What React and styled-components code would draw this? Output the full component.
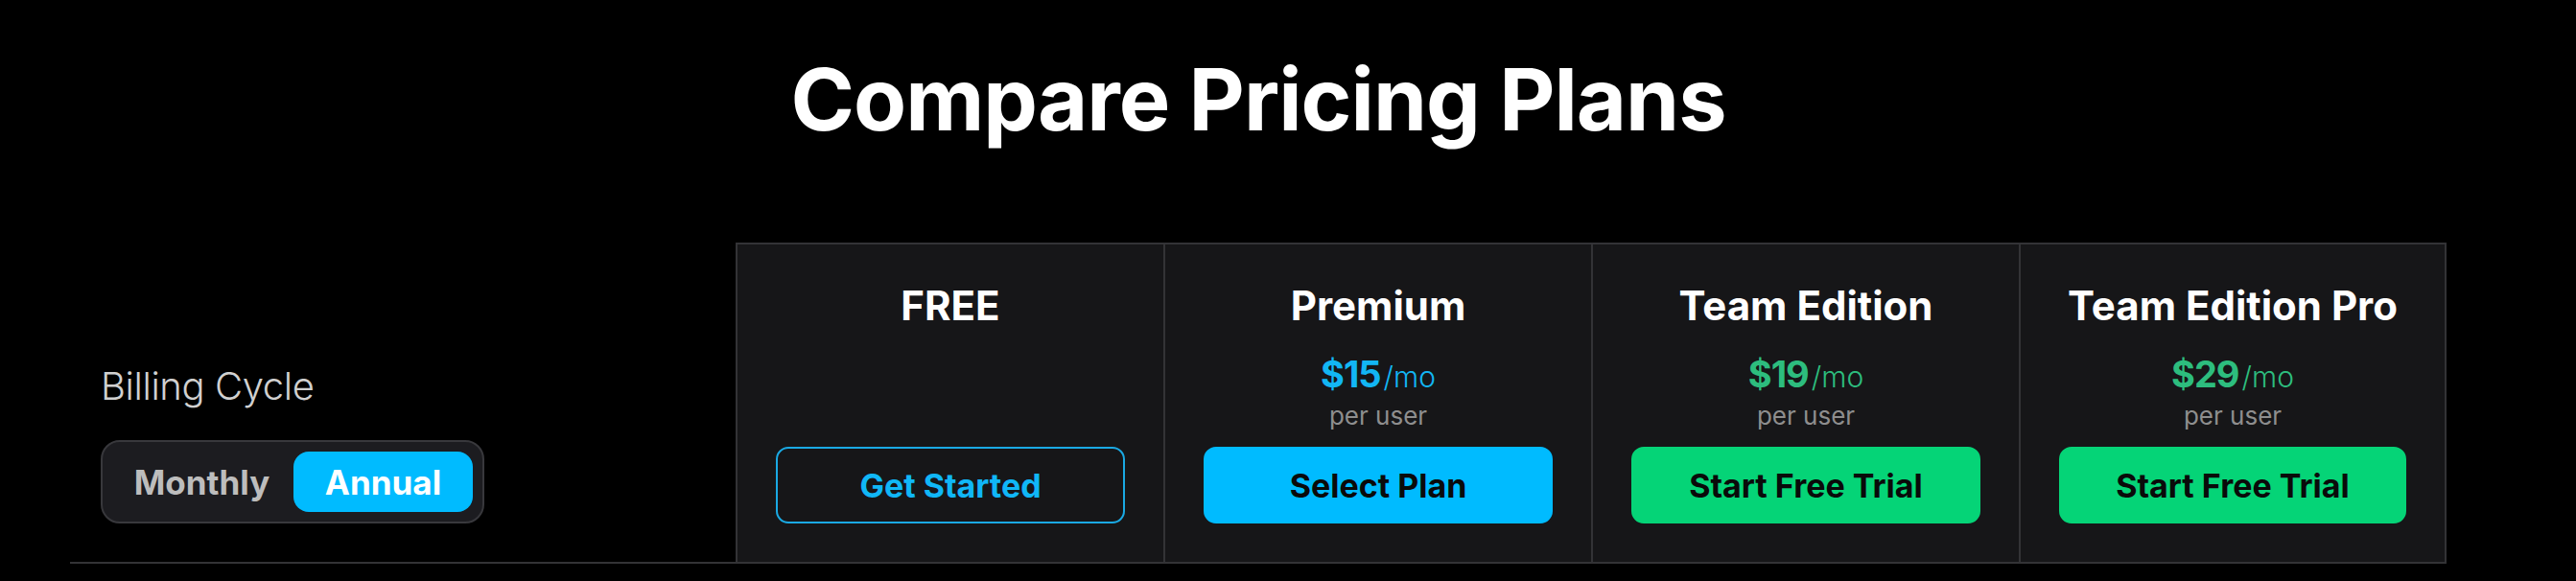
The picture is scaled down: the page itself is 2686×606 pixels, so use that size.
import React from "react";
import styled, { createGlobalStyle } from "styled-components";

const GlobalStyle = createGlobalStyle`
  html, body {
    margin: 0;
    padding: 0;
    background: #000;
  }
  body {
    font-family: Inter, "Noto Sans", sans-serif;
    color: #fff;
  }
  * { box-sizing: border-box; }
`;

const Page = styled.main`
  width: 2478px;
  margin-left: 73px;
  padding-top: 50px;
`;

const Title = styled.h1`
  margin: 0 0 95px;
  text-align: center;
  font-size: 90px;
  line-height: 108px;
  font-weight: 700;
  letter-spacing: -1px;
  color: #fff;
`;

const Row = styled.section`
  display: grid;
  grid-template-columns: 694px repeat(4, 1fr);
  border-bottom: 2px solid #333336;
`;

const LabelCell = styled.div`
  display: flex;
  flex-direction: column;
  justify-content: flex-end;
  align-items: flex-start;
  padding: 0 0 40px 32px;
`;

const Label = styled.div`
  font-size: 40px;
  line-height: 48px;
  font-weight: 300;
  letter-spacing: -0.4px;
  color: #d0d0d0;
  margin-bottom: 32px;
`;

const Toggle = styled.div`
  display: inline-flex;
  gap: 2px;
  padding: 10px;
  border: 2px solid #38383c;
  border-radius: 20px;
  background: #1c1c20;
`;

const ToggleOption = styled.button`
  width: 187px;
  height: 63px;
  border: none;
  border-radius: 16px;
  font-family: inherit;
  font-size: 35px;
  font-weight: 700;
  cursor: pointer;
  background: ${(p) => (p.$active ? "#00bbff" : "transparent")};
  color: ${(p) => (p.$active ? "#ffffff" : "#bdbdbd")};
`;

const PlanCell = styled.div`
  display: flex;
  flex-direction: column;
  align-items: center;
  background: #161618;
  border-top: 2px solid #333336;
  border-left: 2px solid #333336;
  border-right: ${(p) => (p.$last ? "2px solid #333336" : "none")};
  padding: 39px 40px 40px;
`;

const PlanName = styled.h2`
  margin: 0;
  font-size: 42px;
  line-height: 50px;
  font-weight: 700;
  color: #fff;
  white-space: nowrap;
`;

const PriceBlock = styled.div`
  display: flex;
  flex-direction: column;
  align-items: center;
  margin: 23px 0 16px;
`;

const Price = styled.div`
  display: flex;
  align-items: baseline;
  gap: 3px;
  line-height: 46px;
  color: ${(p) => p.$color};
`;

const Amount = styled.span`
  font-size: 38px;
  font-weight: 700;
  letter-spacing: -1px;
`;

const Per = styled.span`
  font-size: 30px;
  font-weight: 300;
`;

const PerUser = styled.div`
  margin-top: 2px;
  font-size: 26px;
  line-height: 32px;
  font-weight: 400;
  color: #8e8e8e;
`;

const ActionButton = styled.button`
  margin-top: auto;
  width: 100%;
  height: 80px;
  border-radius: 13px;
  font-family: inherit;
  font-size: 34px;
  font-weight: 700;
  cursor: pointer;
  border: 2px solid ${(p) => (p.$variant === "outline" ? "#1aa9e3" : p.$bg)};
  background: ${(p) => (p.$variant === "outline" ? "transparent" : p.$bg)};
  color: ${(p) => (p.$variant === "outline" ? "#10b7f7" : "#0a0a0a")};
`;

const plans = [
  { name: "FREE", cta: "Get Started", variant: "outline" },
  { name: "Premium", price: "$15", color: "#12b6f4", cta: "Select Plan", bg: "#00bbff" },
  { name: "Team Edition", price: "$19", color: "#2dbd7e", cta: "Start Free Trial", bg: "#05d477" },
  { name: "Team Edition Pro", price: "$29", color: "#2dbd7e", cta: "Start Free Trial", bg: "#05d477" },
];

export default function App() {
  const [cycle, setCycle] = React.useState("annual");
  return (
    <>
      <GlobalStyle />
      <Page>
        <Title>Compare Pricing Plans</Title>
        <Row>
          <LabelCell>
            <Label>Billing Cycle</Label>
            <Toggle>
              <ToggleOption $active={cycle === "monthly"} onClick={() => setCycle("monthly")}>
                Monthly
              </ToggleOption>
              <ToggleOption $active={cycle === "annual"} onClick={() => setCycle("annual")}>
                Annual
              </ToggleOption>
            </Toggle>
          </LabelCell>
          {plans.map((p, i) => (
            <PlanCell key={p.name} $last={i === plans.length - 1}>
              <PlanName>{p.name}</PlanName>
              {p.price && (
                <PriceBlock>
                  <Price $color={p.color}>
                    <Amount>{p.price}</Amount>
                    <Per>/mo</Per>
                  </Price>
                  <PerUser>per user</PerUser>
                </PriceBlock>
              )}
              <ActionButton $variant={p.variant} $bg={p.bg}>
                {p.cta}
              </ActionButton>
            </PlanCell>
          ))}
        </Row>
      </Page>
    </>
  );
}
